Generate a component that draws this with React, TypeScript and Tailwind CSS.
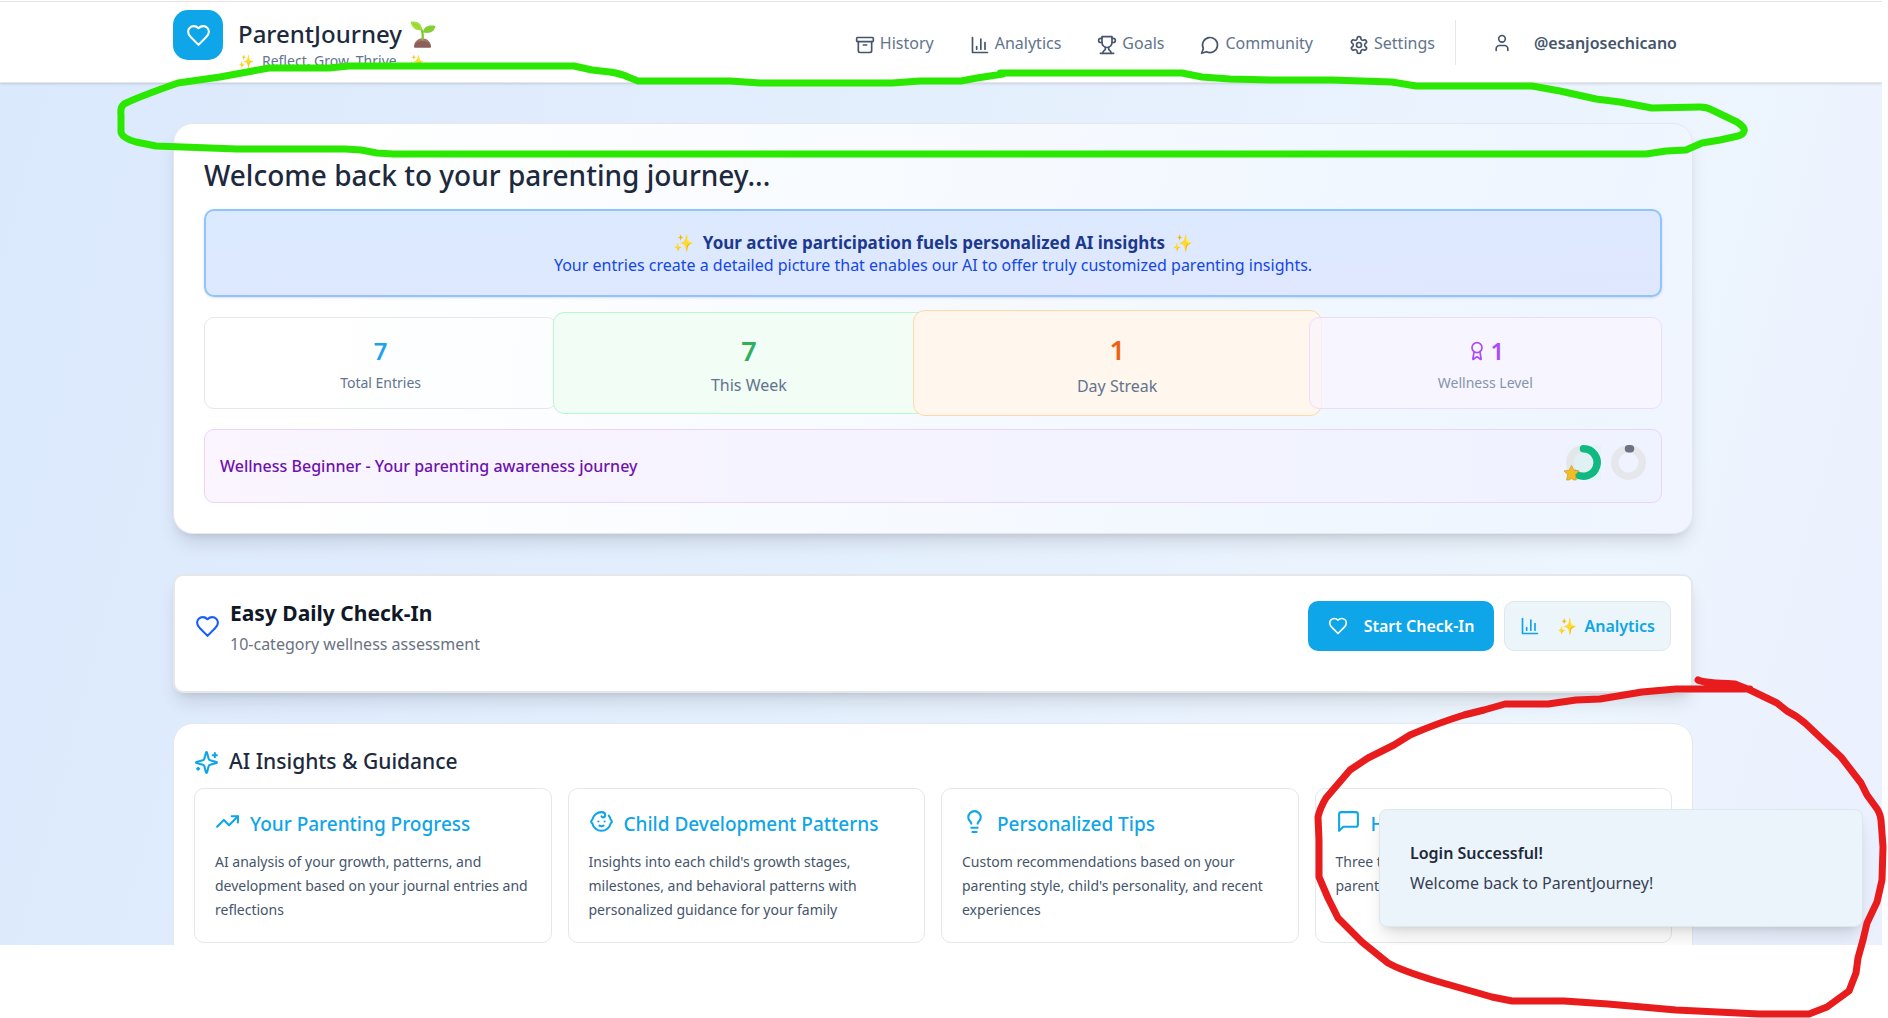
import React from 'react';

const ICONS = {
  heart: [
    'M19 14c1.49-1.46 3-3.21 3-5.5A5.5 5.5 0 0 0 16.5 3c-1.76 0-3 .5-4.5 2-1.5-1.5-2.74-2-4.5-2A5.5 5.5 0 0 0 2 8.5c0 2.3 1.5 4.05 3 5.5l7 7Z',
  ],
  archive: ['M3 3h18a1 1 0 0 1 1 1v3a1 1 0 0 1-1 1H3a1 1 0 0 1-1-1V4a1 1 0 0 1 1-1z', 'M4 8v11a2 2 0 0 0 2 2h12a2 2 0 0 0 2-2V8', 'M10 12h4'],
  chart: ['M3 3v18h18', 'M18 17V9', 'M13 17V5', 'M8 17v-3'],
  trophy: [
    'M6 9H4.5a2.5 2.5 0 0 1 0-5H6',
    'M18 9h1.5a2.5 2.5 0 0 0 0-5H18',
    'M4 22h16',
    'M10 14.66V17c0 .55-.47.98-.97 1.21C7.85 18.75 7 20.24 7 22',
    'M14 14.66V17c0 .55.47.98.97 1.21C16.15 18.75 17 20.24 17 22',
    'M18 2H6v7a6 6 0 0 0 12 0V2Z',
  ],
  circle: ['M7.9 20A9 9 0 1 0 4 16.1L2 22Z'],
  settings: [
    'M12.22 2h-.44a2 2 0 0 0-2 2v.18a2 2 0 0 1-1 1.73l-.43.25a2 2 0 0 1-2 0l-.15-.08a2 2 0 0 0-2.73.73l-.22.38a2 2 0 0 0 .73 2.73l.15.1a2 2 0 0 1 1 1.72v.51a2 2 0 0 1-1 1.74l-.15.09a2 2 0 0 0-.73 2.73l.22.38a2 2 0 0 0 2.73.73l.15-.08a2 2 0 0 1 2 0l.43.25a2 2 0 0 1 1 1.73V20a2 2 0 0 0 2 2h.44a2 2 0 0 0 2-2v-.18a2 2 0 0 1 1-1.73l.43-.25a2 2 0 0 1 2 0l.15.08a2 2 0 0 0 2.73-.73l.22-.39a2 2 0 0 0-.73-2.73l-.15-.08a2 2 0 0 1-1-1.74v-.5a2 2 0 0 1 1-1.74l.15-.09a2 2 0 0 0 .73-2.73l-.22-.38a2 2 0 0 0-2.73-.73l-.15.08a2 2 0 0 1-2 0l-.43-.25a2 2 0 0 1-1-1.73V4a2 2 0 0 0-2-2z',
    'M15 12a3 3 0 1 1-6 0a3 3 0 1 1 6 0',
  ],
  user: ['M19 21v-2a4 4 0 0 0-4-4H9a4 4 0 0 0-4 4v2', 'M16 7a4 4 0 1 1-8 0a4 4 0 1 1 8 0'],
  award: [
    'm15.477 12.89 1.515 8.526a.5.5 0 0 1-.81.47l-3.58-2.687a1 1 0 0 0-1.197 0l-3.586 2.686a.5.5 0 0 1-.81-.469l1.514-8.526',
    'M18 8a6 6 0 1 1-12 0a6 6 0 1 1 12 0',
  ],
  sparkles: [
    'M9.937 15.5A2 2 0 0 0 8.5 14.063l-6.135-1.582a.5.5 0 0 1 0-.962L8.5 9.936A2 2 0 0 0 9.937 8.5l1.582-6.135a.5.5 0 0 1 .963 0L14.063 8.5A2 2 0 0 0 15.5 9.937l6.135 1.581a.5.5 0 0 1 0 .964L15.5 14.063a2 2 0 0 0-1.437 1.437l-1.582 6.135a.5.5 0 0 1-.963 0z',
    'M20 3v4',
    'M22 5h-4',
    'M4 17v2',
    'M5 18H3',
  ],
  trending: ['m22 7-8.5 8.5-5-5L2 17', 'M16 7h6v6'],
  baby: [
    'M9 12h.01',
    'M15 12h.01',
    'M10 16c.5.3 1.2.5 2 .5s1.5-.2 2-.5',
    'M19 6.3a9 9 0 0 1 1.8 3.9 2 2 0 0 1 0 3.6 9 9 0 0 1-17.6 0 2 2 0 0 1 0-3.6A9 9 0 0 1 12 3c2 0 3.5 1.1 3.5 2.5s-.9 2.5-2 2.5c-.8 0-1.5-.4-1.5-1',
  ],
  bulb: ['M15 14c.2-1 .7-1.7 1.5-2.5 1-.9 1.5-2.2 1.5-3.5A6 6 0 0 0 6 8c0 1 .2 2.2 1.5 3.5.7.7 1.3 1.5 1.5 2.5', 'M9 18h6', 'M10 22h4'],
  message: ['M21 15a2 2 0 0 1-2 2H7l-4 4V5a2 2 0 0 1 2-2h14a2 2 0 0 1 2 2z'],
};

type IconName = keyof typeof ICONS;

function Icon({ name, className }: { name: IconName; className?: string }) {
  return (
    <svg
      viewBox="0 0 24 24"
      fill="none"
      stroke="currentColor"
      strokeWidth={2}
      strokeLinecap="round"
      strokeLinejoin="round"
      aria-hidden="true"
      className={`shrink-0 ${className ?? ''}`}
    >
      {ICONS[name].map((d) => (
        <path key={d} d={d} />
      ))}
    </svg>
  );
}

/* Sprout growing from a mound of soil. */
function Seedling() {
  return (
    <svg viewBox="0 0 26 27" className="h-[27px] w-[26px]" role="img" aria-label="Seedling">
      <path d="M4 26a8.500 8.500 0 0 1 17 0q0 .8-1 .8H5q-1 0-1-.8z" fill="#8d5f5a" />
      <path d="M12.500 17.500a8.500 8.500 0 0 1 8 6q-3-3.500-8-3.500t-8 3a8.500 8.500 0 0 1 8-5.500z" fill="#a5766f" />
      <path d="M12 9.500q1.200 4 .6 9" fill="none" stroke="#7dc52f" strokeWidth="2.200" strokeLinecap="round" />
      <path d="M.5.800C7-.5 12 2 12.200 9.500 6 9.800 2 7.500.5.800z" fill="#a5dc3e" />
      <path d="M25.500 5C24.500 10.500 20 13 13 11.500 13.500 6 18 3.500 25.500 5z" fill="#86cf35" />
      <path d="M3 2.500q5 1.500 9 7M24 6q-6 1-10.500 5" fill="none" stroke="#7cc832" strokeWidth=".6" />
    </svg>
  );
}

const NAV: { label: string; icon: IconName }[] = [
  { label: 'History', icon: 'archive' },
  { label: 'Analytics', icon: 'chart' },
  { label: 'Goals', icon: 'trophy' },
  { label: 'Community', icon: 'circle' },
  { label: 'Settings', icon: 'settings' },
];

function Header() {
  return (
    <header className="relative border-y border-t-[#e8e2e5] border-b-gray-200 bg-white shadow-sm">
      <div className="pr-4">
        <div className="mx-auto flex h-20 max-w-[1520px] items-start justify-between">
          <div className="flex gap-[15px] pt-2">
            <div className="flex size-[50px] items-center justify-center rounded-[15px] bg-[#0ea5e9]">
              <Icon name="heart" className="size-[25px] text-white" />
            </div>
            <div className="pt-2">
              <h1 className="flex items-center gap-2 text-[24px] leading-8 font-medium text-slate-800">
                ParentJourney <Seedling />
              </h1>
              <p className="flex items-center gap-2 text-[14px] leading-[22px] text-slate-500">
                <span className="text-[13px]">✨</span>Reflect. Grow. Thrive.<span className="text-[13px]">✨</span>
              </p>
            </div>
          </div>
          <div className="flex items-center pt-[18px]">
            <nav className="flex gap-9 pr-5">
              {NAV.map((n) => (
                <a key={n.label} href="#" className="flex items-center gap-[5px] text-[16px] leading-6 text-slate-500">
                  <Icon name={n.icon} className="mt-1 size-5 text-slate-600" />
                  {n.label}
                </a>
              ))}
            </nav>
            <button type="button" className="flex h-[45px] items-center border-l border-gray-200 pr-4 pl-9 text-[16px] font-semibold text-slate-600">
              <Icon name="user" className="mr-[22px] size-5" />
              @esanjosechicano
            </button>
          </div>
        </div>
      </div>
    </header>
  );
}

function Rings() {
  return (
    <div className="-mt-2 flex gap-2.5">
      <svg viewBox="0 0 35 35" className="size-[35px] overflow-visible" role="img" aria-label="Progress">
        <rect width="35" height="35" fill="#e4f3f7" />
        <rect width="18" height="18" fill="#edf2fd" />
        <circle cx="17.5" cy="17.5" r="13.75" fill="#dff1f5" stroke="#e2e8ea" strokeWidth="7.5" />
        <path d="M17.5 3.75a13.75 13.75 0 1 1-8 25" fill="none" stroke="#10b981" strokeWidth="7.5" strokeLinecap="round" />
        <path d="M5.500 20.500L7.900 25.200L13 25.900L9.300 29.600L10.300 35H8L5.500 33.500L3 35H.6L1.700 29.600L-2 25.900L3.200 25.200Z" fill="#f0bd27" stroke="#d9a11e" strokeWidth=".8" />
      </svg>
      <svg viewBox="0 0 35 35" className="size-[35px]" role="img" aria-label="Next level">
        <circle cx="17.5" cy="17.5" r="13.75" fill="none" stroke="#e5e7eb" strokeWidth="7.5" />
        <path d="M17.500 3.750h2" stroke="#6b7280" strokeWidth="7.5" strokeLinecap="round" />
      </svg>
    </div>
  );
}

function Welcome() {
  return (
    <section className="rounded-[20px] border border-gray-200 bg-[linear-gradient(100deg,#ffffff_10%,#eff6ff_85%,#f0f5ff)] p-[30px] shadow-[0_12px_19px_-4px_rgba(0,0,0,0.12),0_5px_8px_-5px_rgba(0,0,0,0.12)]">
      <h2 className="text-[28px] leading-[42px] font-medium text-slate-800">Welcome back to your parenting journey...</h2>
      <div className="mt-[13px] rounded-[10px] border-2 border-blue-300 bg-linear-to-br from-blue-100 to-indigo-100 pt-[21px] pb-[19px] text-center shadow-sm">
        <p className="text-[17px] leading-[22px] font-bold text-blue-900">
          <span className="mr-1">✨</span> Your active participation fuels personalized AI insights <span className="ml-0.5">✨</span>
        </p>
        <p className="text-[16px] leading-[22px] text-blue-700">
          Your entries create a detailed picture that enables our AI to offer truly customized parenting insights.
        </p>
      </div>
      <div className="mt-5 grid h-[92px] grid-cols-4 gap-[15px]">
        <div className="flex flex-col items-center justify-center rounded-[10px] border border-gray-200 pt-2">
          <span className="text-[24px] leading-8 font-semibold text-[#1ba3ec]">7</span>
          <span className="text-[14px] leading-8 text-slate-500">Total Entries</span>
        </div>
        <div className="-mx-[19px] -my-[5px] flex flex-col items-center justify-center rounded-[11px] border border-green-200 bg-[#f1fdf5] pt-2">
          <span className="text-[27px] leading-9 font-semibold text-[#2fae5f]">7</span>
          <span className="text-[16px] leading-8 text-slate-500">This Week</span>
        </div>
        <div className="-mx-[28px] -my-[7px] flex flex-col items-center justify-center rounded-[12px] border border-orange-200 bg-[#fff6ed] pt-2.5">
          <span className="text-[27px] leading-9 font-semibold text-[#ee6115]">1</span>
          <span className="text-[16px] leading-9 text-slate-500">Day Streak</span>
        </div>
        <div className="flex flex-col items-center justify-center rounded-[10px] border border-purple-200 bg-purple-50 pt-2 opacity-75">
          <span className="flex items-center gap-1 text-[24px] leading-8 font-semibold text-purple-600">
            <Icon name="award" className="size-5" />1
          </span>
          <span className="text-[14px] leading-8 text-slate-500">Wellness Level</span>
        </div>
      </div>
      <div className="mt-5 flex h-[74px] items-center justify-between rounded-[10px] border border-purple-200 bg-linear-to-r from-[#faf5ff] via-[#f5f3ff] via-40% to-[#eff3ff] px-[15px]">
        <p className="text-[16px] font-medium text-purple-800">Wellness Beginner - Your parenting awareness journey</p>
        <Rings />
      </div>
    </section>
  );
}

function CheckIn() {
  return (
    <section className="mt-10 flex items-start justify-between rounded-[10px] border-2 border-gray-200 bg-white px-5 pt-[25px] pb-10 shadow-[0_12px_19px_-4px_rgba(0,0,0,0.12),0_5px_8px_-5px_rgba(0,0,0,0.12)]">
      <div className="flex h-[50px] items-center gap-2.5">
        <Icon name="heart" className="size-[25px] text-blue-600" />
        <div className="pt-1">
          <h3 className="text-[21px] leading-8 font-bold text-gray-900">Easy Daily Check-In</h3>
          <p className="text-[16px] leading-[30px] text-gray-500">10-category wellness assessment</p>
        </div>
      </div>
      <div className="flex gap-2.5">
        <button type="button" className="flex h-[50px] items-center gap-4 rounded-[10px] bg-[#0ea5e9] px-5 text-[16px] font-semibold text-white">
          <Icon name="heart" className="size-5" />
          Start Check-In
        </button>
        <button type="button" className="flex h-[50px] items-center gap-[7px] rounded-[10px] border border-[#dde7ec] bg-[#ebf5fa] px-[15px] text-[16px] font-semibold text-[#0ea5e9]">
          <Icon name="chart" className="mr-2.5 size-5" />
          <span>✨</span>
          Analytics
        </button>
      </div>
    </section>
  );
}

const INSIGHTS: { title: string; icon: IconName; text: string }[] = [
  { title: 'Your Parenting Progress', icon: 'trending', text: 'AI analysis of your growth, patterns, and development based on your journal entries and reflections' },
  { title: 'Child Development Patterns', icon: 'baby', text: "Insights into each child's growth stages, milestones, and behavioral patterns with personalized guidance for your family" },
  { title: 'Personalized Tips', icon: 'bulb', text: "Custom recommendations based on your parenting style, child's personality, and recent experiences" },
  { title: 'H', icon: 'message', text: 'Three t\nparent' },
];

function Insights() {
  return (
    <section className="mt-[30px] rounded-[20px] border border-gray-200 bg-white p-5 pb-10">
      <h2 className="flex h-9 items-center gap-2.5 text-[21px] font-medium text-slate-800">
        <Icon name="sparkles" className="size-[25px] text-[#0ea5e9]" />
        AI Insights &amp; Guidance
      </h2>
      <div className="mt-2 grid grid-cols-4 gap-4">
        {INSIGHTS.map((c) => (
          <article key={c.title} className="rounded-[10px] border border-gray-200 p-5">
            <h3 className="flex items-start gap-2.5 text-[19px] leading-[30px] font-medium text-[#0ea5e9]">
              <Icon name={c.icon} className="size-[25px]" />
              {c.title}
            </h3>
            <p className="mt-[11px] text-[14px] leading-6 whitespace-pre-line text-slate-600">{c.text}</p>
          </article>
        ))}
      </div>
    </section>
  );
}

/* Hand-drawn marker loops laid over the page. */
function MarkerLoops() {
  return (
    <svg viewBox="0 0 1888 1018" className="pointer-events-none absolute top-0 left-0 w-full" fill="none" strokeLinecap="round" strokeLinejoin="round" aria-hidden="true">
      <path
        stroke="#2ae800"
        strokeWidth="7"
        d="M121 115Q120 107 124 104Q138 97 178 83L220 77L269 68L329 68L349 66H574L592 70L610 72Q622 74 628 77L638 81H730L760 83H892L920 81H961L977 78L1003 74L1000 73H1182L1202 77L1230 79L1274 80H1332L1392 82L1416 86H1532L1560 91L1596 99L1620 102L1652 108L1700 107Q1707 107 1712 110L1737 122Q1746 128 1744 131Q1743 135 1738 136L1720 140L1702 143L1686 150L1666 151L1646 154H393L377 153L361 150L345 149H237L156 146L136 142Q122 138 121 132Z"
      />
      <path
        stroke="#e81c1c"
        strokeWidth="7"
        d="M1698 680Q1704 683 1735 684L1750 690L1777 703L1787 711Q1797 716 1805 723L1841 757L1861 783L1867 795L1875 806Q1880 812 1881 820L1883 847L1882 880L1877 902L1867 923L1863 940L1858 958L1856 973L1849 991L1827 1007L1809 1014H1759L1676 1010L1608 1004L1564 1001H1512L1492 997L1436 981Q1400 970 1388 963L1362 942L1338 918L1328 898L1319 877V840L1318 817Q1320 808 1326 798L1350 770L1368 758L1394 745L1410 735Q1438 723 1464 715L1484 710L1505 704H1548L1576 700L1600 699L1642 692L1676 689H1750"
      />
    </svg>
  );
}

export default function App() {
  return (
    <div className="relative h-screen overflow-hidden bg-white pt-px font-['Noto_Sans',sans-serif]">
      <div className="relative mr-1.5 h-[calc(100vh-74px)] overflow-hidden bg-[linear-gradient(105deg,#dbe9fd,#e4effd_45%,#edf5fe_82%,#eaf0fe)]">
        <Header />
        <main className="pt-10 pr-4">
          <div className="mx-auto max-w-[1520px]">
            <Welcome />
            <CheckIn />
            <Insights />
          </div>
        </main>
        <div role="status" className="absolute right-[19px] bottom-[18px] w-[484px] rounded-lg border border-[#dde7ec] bg-[#ecf4fb] px-[30px] py-7 text-[16px] shadow-[0_12px_19px_-4px_rgba(0,0,0,0.12),0_5px_8px_-5px_rgba(0,0,0,0.12)]">
          <p className="leading-[30px] font-semibold text-gray-800">Login Successful!</p>
          <p className="leading-[30px] text-gray-700">Welcome back to ParentJourney!</p>
        </div>
      </div>
      <MarkerLoops />
    </div>
  );
}
